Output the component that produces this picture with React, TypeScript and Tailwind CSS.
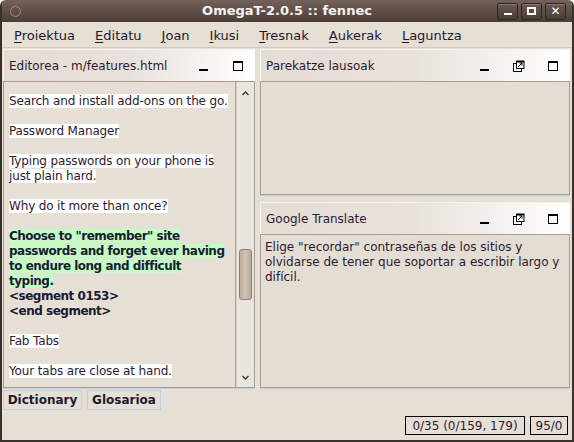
import React from "react";

const font = { fontFamily: '"DejaVu Sans", "Liberation Sans", sans-serif' };

const MinIcon = () => (
  <svg width="12" height="12" viewBox="0 0 12 12">
    <rect x="1" y="9" width="9" height="2" fill="#000" />
  </svg>
);

const MaxIcon = () => (
  <svg width="12" height="12" viewBox="0 0 12 12">
    <rect x="1.5" y="1.5" width="9" height="9" fill="none" stroke="#000" strokeWidth="1" />
    <rect x="1" y="1" width="10" height="2" fill="#000" />
  </svg>
);

const FloatIcon = () => (
  <svg width="12" height="12" viewBox="0 0 12 12">
    <rect x="0.5" y="3.5" width="8" height="8" fill="#fff" stroke="#000" />
    <rect x="3" y="0.5" width="8.5" height="8.5" fill="#000" />
    <rect x="4" y="2.5" width="6.5" height="5.5" fill="#fff" />
    <path d="M5 7 L9 3 M6.5 3 H9 V5.5" stroke="#000" strokeWidth="1" fill="none" />
  </svg>
);

const PanelHeader = ({ title, float }: { title: string; float?: boolean }) => (
  <div className="h-[32px] flex items-center pl-[5px] border-t border-l border-[#f6f3ef] bg-gradient-to-r from-[#e4ddd4] via-[#e9e2dc] to-[#ffffff]">
    <div className="flex-1 text-[12px] text-[#2c1a33]">{title}</div>
    <div className="flex items-center">
      <div className="w-[34px] flex justify-center">
        <MinIcon />
      </div>
      {float && (
        <div className="w-[34px] flex justify-center">
          <FloatIcon />
        </div>
      )}
      <div className="w-[34px] flex justify-center">
        <MaxIcon />
      </div>
    </div>
  </div>
);

const Line = ({ children }: { children: React.ReactNode }) => (
  <div className="h-[15px] leading-[15px]">
    <span className="bg-white">{children}</span>
  </div>
);

const Gap = () => <div className="h-[15px]" />;

const GreenLine = ({ children }: { children: React.ReactNode }) => (
  <div className="h-[15px] leading-[15px] tracking-[-0.5px]">
    <span className="bg-[#c4fcc4] font-bold text-[#1a1a33]">{children}</span>
  </div>
);

const TitleButton = ({ children }: { children: React.ReactNode }) => (
  <div className="w-[21px] h-[17px] rounded-[2px] border border-[#2e2420] bg-gradient-to-b from-[#6a5a52] to-[#4a3c36] flex items-center justify-center shadow-[inset_0_1px_0_#8a7a70]">
    {children}
  </div>
);

export default function App() {
  const menus = ["Proiektua", "Editatu", "Joan", "Ikusi", "Tresnak", "Aukerak", "Laguntza"];
  return (
    <div
      className="w-[574px] h-[442px] flex flex-col bg-[#e6dfd6] border-x-2 border-b-2 border-[#3b312c] rounded-t-[6px] overflow-hidden"
      style={font}
    >
      {/* title bar */}
      <div className="h-[22px] flex items-center px-[8px] bg-gradient-to-b from-[#74625a] to-[#4b3d37] text-white">
        <div className="w-[11px] h-[11px] rounded-full border border-[#a39088] bg-[#5f4e46]" />
        <div className="flex-1 text-center font-bold text-[13px] text-[#f4f2f0] pl-[56px]">
          OmegaT-2.0.5 :: fennec
        </div>
        <div className="flex gap-[3px] mr-[-2px]">
          <TitleButton>
            <div className="w-[8px] h-[2px] bg-white mt-[6px]" />
          </TitleButton>
          <TitleButton>
            <div className="w-[9px] h-[8px] border-2 border-white" />
          </TitleButton>
          <TitleButton>
            <span className="text-white font-bold text-[12px] leading-none">✕</span>
          </TitleButton>
        </div>
      </div>

      {/* menu bar */}
      <div className="h-[26px] flex items-start gap-[20px] pl-[12px] pt-[4px] text-[13px] text-[#1e1a2c] border-b border-[#d2c9bd]">
        {menus.map((m) => (
          <span key={m}>
            <u className="underline-offset-2">{m[0]}</u>
            {m.slice(1)}
          </span>
        ))}
      </div>

      {/* main */}
      <div className="flex gap-[5px] pl-[1px] pr-[2px] pt-[1px] h-[341px]">
        {/* editor */}
        <div className="w-[252px] flex flex-col border-b border-[#bcd0e4]">
          <PanelHeader title="Editorea - m/features.html" />
          <div className="flex-1 flex border border-[#a99d91] bg-[#e6dfd6]">
            <div className="flex-1 pl-[5px] pt-[12px] text-[12px] text-[#2c1a33] tracking-[-0.15px] whitespace-nowrap overflow-hidden border-r border-[#b0a496]">
              <Line>Search and install add-ons on the go.</Line>
              <Gap />
              <Line>Password Manager</Line>
              <Gap />
              <Line>Typing passwords on your phone is </Line>
              <Line>just plain hard.</Line>
              <Gap />
              <Line>Why do it more than once?</Line>
              <Gap />
              <GreenLine>Choose to "remember" site </GreenLine>
              <GreenLine>passwords and forget ever having </GreenLine>
              <GreenLine>to endure long and difficult </GreenLine>
              <GreenLine>typing.</GreenLine>
              <div className="h-[15px] leading-[15px] font-bold tracking-[-0.5px] text-[#1a1a33]">&lt;segment 0153&gt;</div>
              <div className="h-[15px] leading-[15px] font-bold tracking-[-0.5px] text-[#1a1a33]">&lt;end segment&gt;</div>
              <Gap />
              <Line>Fab Tabs</Line>
              <Gap />
              <Line>Your tabs are close at hand.</Line>
            </div>
            <div className="w-[18px] flex flex-col items-center bg-[#ebe5df] border-l border-[#d7cec4]">
              <div className="h-[14px] flex items-end">
                <svg width="7" height="5" viewBox="0 0 7 5">
                  <path d="M0.5 4 L3.5 1 L6.5 4" stroke="#333" fill="none" strokeWidth="1.3" />
                </svg>
              </div>
              <div className="flex-1 w-full relative">
                <div className="absolute left-[2px] top-[153px] w-[13px] h-[51px] rounded-[3px] border border-[#8f7f70] bg-gradient-to-r from-[#bcae9f] via-[#cfc3b6] to-[#b9ab9c]" />
              </div>
              <div className="h-[14px] flex items-start pt-[2px]">
                <svg width="7" height="5" viewBox="0 0 7 5">
                  <path d="M0.5 1 L3.5 4 L6.5 1" stroke="#333" fill="none" strokeWidth="1.3" />
                </svg>
              </div>
            </div>
          </div>
        </div>

        {/* right column */}
        <div className="flex-1 flex flex-col gap-[6px]">
          <div className="h-[147px] flex flex-col border-b border-[#bcd0e4]">
            <PanelHeader title="Parekatze lausoak" float />
            <div className="flex-1 border border-[#a99d91] bg-[#e4ddd4]" />
          </div>
          <div className="flex-1 flex flex-col border-b border-[#bcd0e4]">
            <PanelHeader title="Google Translate" float />
            <div className="flex-1 border border-[#a99d91] bg-[#e4ddd4] px-[4px] pt-[5px] text-[12px] leading-[15px] text-[#2c1a33]">
              Elige "recordar" contraseñas de los sitios y olvidarse de tener que soportar a escribir largo y
              difícil.
            </div>
          </div>
        </div>
      </div>

      {/* tabs */}
      <div className="flex gap-[5px] pl-[1px] pt-[1px] text-[12px] font-bold text-[#1e1a2c]">
        <div className="h-[20px] w-[79px] flex items-center justify-center border border-[#bcd0e4]">Dictionary</div>
        <div className="h-[20px] w-[74px] flex items-center justify-center border border-[#bcd0e4]">Glosarioa</div>
      </div>

      {/* status */}
      <div className="flex justify-end gap-[5px] pr-[4px] pt-[6px] text-[12px] text-[#2c1a33]">
        <div className="h-[19px] w-[120px] flex items-center justify-center border border-black">0/35 (0/159, 179)</div>
        <div className="h-[19px] w-[38px] flex items-center justify-center border border-black">95/0</div>
      </div>
    </div>
  );
}
